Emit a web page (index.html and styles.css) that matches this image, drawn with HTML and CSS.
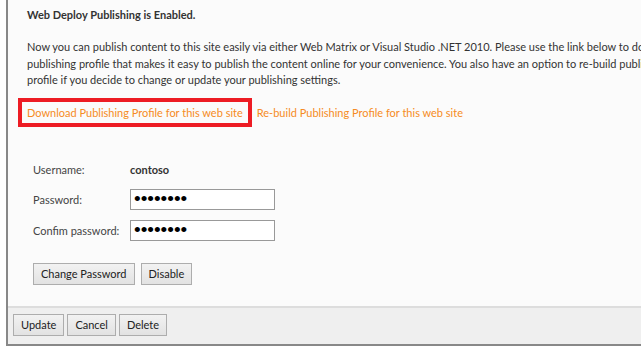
FILE: index.html
```
<!DOCTYPE html>
<html>
<head>
	<title>Publishing</title>
	<link rel="stylesheet" href="styles.css">
</head>
<body>
	<div class="panel">
		<div class="content">
			<h3>Web Deploy Publishing is Enabled.</h3>
			<p class="intro">Now you can publish content to this site easily via either Web Matrix or Visual Studio .NET 2010. Please use the link below to download your<br>publishing profile that makes it easy to publish the content online for your convenience. You also have an option to re-build publishing<br>profile if you decide to change or update your publishing settings.</p>
			<div class="links">
				<span class="mark"><a href="#">Download Publishing Profile for this web site</a></span>
				<a href="#">Re-build Publishing Profile for this web site</a>
			</div>
			<table class="account">
				<tr>
					<td class="label">Username:</td>
					<td class="user">contoso</td>
				</tr>
				<tr>
					<td class="label">Password:</td>
					<td><input type="password" value="password"></td>
				</tr>
				<tr>
					<td class="label">Confim password:</td>
					<td><input type="password" value="password"></td>
				</tr>
			</table>
			<div class="actions">
				<button>Change Password</button>
				<button>Disable</button>
			</div>
		</div>
		<div class="footer">
			<button>Update</button>
			<button>Cancel</button>
			<button>Delete</button>
		</div>
	</div>
</body>
</html>
```

FILE: styles.css
```
*{
	margin: 0px;
	padding: 0px;
	box-sizing: border-box;
}
body{
	background-color: #ffffff;
	overflow: hidden;
	font-family: Lato, "Noto Sans", sans-serif;
	font-size: 11px;
	color: #333333;
}
.panel{
	width: 900px;
	margin-left: 6px;
	border-left: 2px solid #888888;
	border-bottom: 2px solid #888888;
	background-color: #fbfbfb;
}
.content{
	padding: 7px 0px 21px 19px;
}
h3{
	font-size: 11px;
	font-weight: bold;
	line-height: 16px;
}
.intro{
	margin-top: 16px;
	line-height: 16.5px;
}
.links{
	margin-top: 9px;
	margin-left: -9px;
	display: flex;
	align-items: center;
	gap: 5px;
}
.mark{
	border: 4px solid #ed1c24;
	padding: 4px 5px 4px 5px;
}
a{
	color: #f68b24;
	text-decoration: none;
}
.account{
	margin-top: 34px;
	margin-left: 6px;
	border-collapse: collapse;
}
.account td{
	padding: 0px 0px 10px 0px;
	height: 31px;
	vertical-align: middle;
	white-space: nowrap;
}
.account tr:first-child td{
	height: 28px;
}
.label{
	width: 97px;
	color: #444444;
}
.user{
	font-weight: bold;
}
input{
	width: 145px;
	height: 21px;
	border: 1px solid #999999;
	background-color: #ffffff;
	padding: 0px 3px;
	font-size: 19px;
	color: #000000;
}
.actions{
	margin-top: 12px;
	margin-left: 6px;
	display: flex;
	gap: 6px;
}
button{
	height: 22px;
	padding: 0px 7px;
	font-family: Lato, "Noto Sans", sans-serif;
	font-size: 11px;
	color: #222222;
	border: 1px solid #adadad;
	background: linear-gradient(#f2f2f2, #e2e2e2);
}
.footer{
	border-top: 2px solid #dddddd;
	background-color: #efefef;
	padding: 6px 5px 8px 5px;
	display: flex;
	gap: 3px;
}
```
